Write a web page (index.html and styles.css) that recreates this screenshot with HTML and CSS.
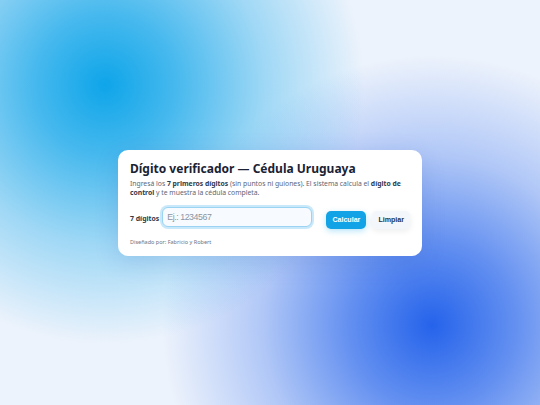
FILE: index.html
```html
<!DOCTYPE html>
<html lang="es">
<head>
<meta charset="utf-8">
<title>Dígito verificador — Cédula Uruguaya</title>
<link rel="stylesheet" href="styles.css">
</head>
<body>
<main class="page">
  <section class="card">
    <h1 class="title">Dígito verificador — Cédula Uruguaya</h1>
    <p class="lead">Ingresá los <strong>7 primeros dígitos</strong> (sin puntos ni guiones). El sistema calcula el <strong>dígito de control</strong> y te muestra la cédula completa.</p>
    <div class="row">
      <label class="label" for="ci">7 dígitos</label>
      <input class="input" id="ci" type="text" placeholder="Ej.: 1234567">
      <button class="btn btn-primary" type="button">Calcular</button>
      <button class="btn btn-ghost" type="button">Limpiar</button>
    </div>
    <p class="credit">Diseñado por: Fabricio y Robert</p>
  </section>
</main>
</body>
</html>
```
FILE: styles.css
```css
html, body {
  margin: 0;
  height: 100%;
}
body {
  font-family: "Noto Sans", "Open Sans", sans-serif;
  background-color: #edf3fc;
  background-image:
    radial-gradient(circle at 105px 85px, rgba(14,165,233,1) 0, rgba(14,165,233,0.75) 70px, rgba(14,165,233,0.35) 160px, rgba(14,165,233,0) 260px),
    radial-gradient(circle at 432px 325px, rgba(37,99,235,1) 0, rgba(37,99,235,0.7) 80px, rgba(37,99,235,0.3) 170px, rgba(37,99,235,0) 270px);
}
.page {
  height: 100%;
  display: flex;
  align-items: center;
  justify-content: center;
}
.card {
  width: 280px;
  background: #ffffff;
  border-radius: 10px;
  padding: 11px 12px 10px;
  box-shadow: 0 6px 24px rgba(30, 64, 175, 0.15);
}
.title {
  margin: 0;
  font-size: 12px;
  font-weight: 700;
  line-height: 16px;
  color: #1a2233;
}
.lead {
  margin: 2px 0 0;
  font-size: 6.8px;
  line-height: 9.5px;
  color: #5b6576;
}
.lead strong {
  color: #2f3a4c;
  font-weight: 700;
}
.row {
  display: flex;
  align-items: center;
  margin-top: 10px;
}
.label {
  font-size: 6.9px;
  font-weight: 700;
  color: #2f3a4c;
  margin-right: 3px;
}
.input {
  flex: 1;
  min-width: 0;
  height: 20px;
  box-sizing: border-box;
  border: 1px solid #9bd3f2;
  border-radius: 6px;
  box-shadow: 0 0 0 2px #c9e8fa;
  background: #f7fbff;
  padding: 0 4px;
  font-family: "Liberation Sans", Arial, sans-serif;
  font-size: 8.8px;
  letter-spacing: -0.45px;
  color: #334155;
  outline: none;
  margin-top: -2px;
}
.input::placeholder {
  color: #8a94a3;
}
.btn {
  font-family: "Liberation Sans", Arial, sans-serif;
  font-size: 7.1px;
  font-weight: 700;
  height: 18px;
  border-radius: 5px;
  border: none;
  padding: 0 6px;
  margin-top: 3px;
}
.btn-primary {
  background: #12a3e6;
  color: #ffffff;
  margin-left: 14px;
  box-shadow: 0 2px 6px rgba(14, 165, 233, 0.3);
}
.btn-ghost {
  background: #f3f6fa;
  color: #2a3343;
  margin-left: 6px;
  box-shadow: 0 2px 6px rgba(15, 23, 42, 0.08);
}
.credit {
  margin: 9px 0 0;
  font-size: 5.5px;
  line-height: 8px;
  color: #6b7483;
}
```
